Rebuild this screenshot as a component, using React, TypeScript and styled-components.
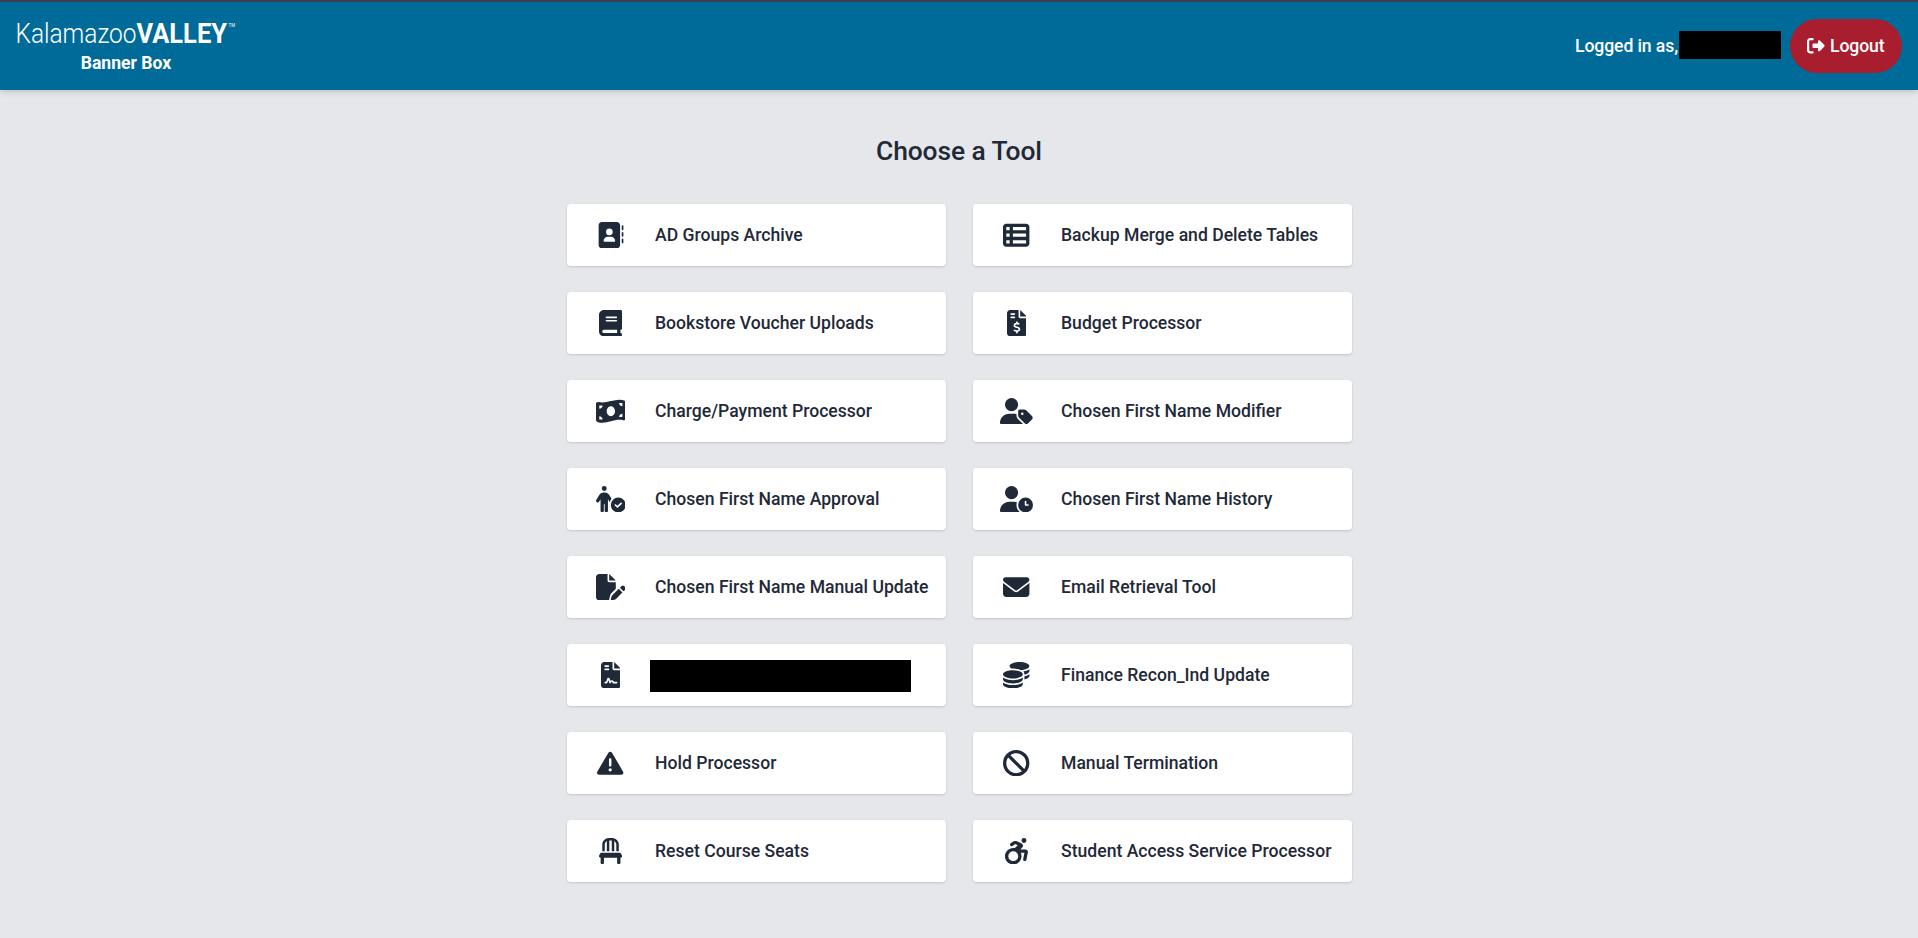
import React from "react";
import styled, { createGlobalStyle } from "styled-components";
import type { IconType } from "react-icons";
import {
  FaAddressBook,
  FaTableList,
  FaBook,
  FaFileInvoiceDollar,
  FaMoneyBillWave,
  FaUserTag,
  FaPersonCircleCheck,
  FaUserClock,
  FaFilePen,
  FaEnvelope,
  FaFileContract,
  FaCoins,
  FaTriangleExclamation,
  FaBan,
  FaChair,
  FaWheelchairMove,
  FaRightFromBracket,
} from "react-icons/fa6";

const GlobalStyle = createGlobalStyle`
  *, *::before, *::after { box-sizing: border-box; }
  body {
    margin: 0;
    min-height: 100vh;
    background: #e5e7eb;
    color: #1f2937;
    font-family: Roboto, "Liberation Sans", sans-serif;
    font-weight: 500;
    font-size: 17.6px;
  }
`;

const Header = styled.header`
  display: flex;
  align-items: center;
  justify-content: space-between;
  height: 90px;
  padding: 0 16px;
  border-top: 2px solid #374151;
  background: #006b99;
  color: #fff;
  box-shadow: 0 4px 6px -1px rgba(0, 0, 0, 0.1), 0 2px 4px -1px rgba(0, 0, 0, 0.06);
`;

const Brand = styled.div`
  display: flex;
  flex-direction: column;
  align-items: center;
  width: 220px;
  margin-top: 2px;
`;

const Logo = styled.svg`
  display: block;
  width: 220px;
  height: 26px;
  fill: #fff;
  overflow: visible;
`;

const AppName = styled.div`
  margin-top: 5px;
  font-size: 17.6px;
  line-height: 26px;
  font-weight: 700;
`;

const Session = styled.div`
  display: flex;
  align-items: center;
  letter-spacing: -0.1px;
`;

const Redacted = styled.span<{ $width: number; $height: number }>`
  display: block;
  flex: none;
  width: ${(p) => p.$width}px;
  height: ${(p) => p.$height}px;
  background: #000;
`;

const UserName = styled(Redacted)`
  margin: 0 0 2px 1px;
`;

const SessionText = styled.span`
  padding-bottom: 1px;
`;

const LogoutButton = styled.button`
  display: flex;
  align-items: center;
  justify-content: center;
  gap: 5px;
  width: 112px;
  height: 54px;
  margin-left: 9px;
  padding: 0 0 1px;
  border: 0;
  border-radius: 27px;
  background: #a91e2e;
  color: #fff;
  font: inherit;
  letter-spacing: inherit;
`;

const Main = styled.main`
  display: flex;
  flex-direction: column;
  align-items: center;
`;

const Title = styled.h1`
  margin: 43px 0 35px;
  font-size: 26.4px;
  line-height: 36px;
  font-weight: 500;
  letter-spacing: -0.1px;
`;

const ToolGrid = styled.div`
  display: grid;
  grid-template-columns: repeat(2, 379px);
  gap: 26px 27px;
`;

const ToolCard = styled.a`
  display: flex;
  align-items: center;
  height: 62px;
  border-radius: 4px;
  background: #fff;
  box-shadow: 0 1px 3px rgba(0, 0, 0, 0.1), 0 1px 2px rgba(0, 0, 0, 0.06);
  white-space: nowrap;
`;

/* Font Awesome glyphs share a 512-unit height; $units is the glyph's own width. */
const IconSlot = styled.span<{ $units: number }>`
  display: flex;
  justify-content: center;
  width: 88px;
  flex: none;

  svg {
    display: block;
    flex: none;
    width: ${(p) => (p.$units / 512) * 26.4}px;
    height: 26.4px;
  }
`;

const RedactedLabel = styled(Redacted)`
  margin: 2px 0 0 -5px;
`;

const ToolName = styled.span`
  padding: 0 0 1px 0.5px;
`;

const tools: { icon: IconType; units: number; name?: string }[] = [
  { icon: FaAddressBook, units: 512, name: "AD Groups Archive" },
  { icon: FaTableList, units: 512, name: "Backup Merge and Delete Tables" },
  { icon: FaBook, units: 448, name: "Bookstore Voucher Uploads" },
  { icon: FaFileInvoiceDollar, units: 384, name: "Budget Processor" },
  { icon: FaMoneyBillWave, units: 576, name: "Charge/Payment Processor" },
  { icon: FaUserTag, units: 640, name: "Chosen First Name Modifier" },
  { icon: FaPersonCircleCheck, units: 576, name: "Chosen First Name Approval" },
  { icon: FaUserClock, units: 640, name: "Chosen First Name History" },
  { icon: FaFilePen, units: 576, name: "Chosen First Name Manual Update" },
  { icon: FaEnvelope, units: 512, name: "Email Retrieval Tool" },
  { icon: FaFileContract, units: 384 },
  { icon: FaCoins, units: 512, name: "Finance Recon_Ind Update" },
  { icon: FaTriangleExclamation, units: 512, name: "Hold Processor" },
  { icon: FaBan, units: 512, name: "Manual Termination" },
  { icon: FaChair, units: 448, name: "Reset Course Seats" },
  { icon: FaWheelchairMove, units: 448, name: "Student Access Service Processor" },
];

export default function App() {
  return (
    <>
      <GlobalStyle />
      <Header>
        <Brand>
          <Logo viewBox="0 0 220 26">
            <text x="-0.5" y="24" fontSize="27.5" fontWeight="300" textLength="121" lengthAdjust="spacingAndGlyphs">
              Kalamazoo
            </text>
            <text x="120.5" y="24" fontSize="27.5" fontWeight="700" textLength="90.5" lengthAdjust="spacingAndGlyphs">
              VALLEY
            </text>
            <text x="212.5" y="7.5" fontSize="5" fontWeight="400" textLength="6.5" lengthAdjust="spacingAndGlyphs">
              TM
            </text>
          </Logo>
          <AppName>Banner Box</AppName>
        </Brand>
        <Session>
          <SessionText>Logged in as,</SessionText>
          <UserName $width={102} $height={28} />
          <LogoutButton>
            <FaRightFromBracket size={17.6} />
            Logout
          </LogoutButton>
        </Session>
      </Header>
      <Main>
        <Title>Choose a Tool</Title>
        <ToolGrid>
          {tools.map(({ icon: Icon, units, name }, i) => (
            <ToolCard key={i}>
              <IconSlot $units={units}>
                <Icon />
              </IconSlot>
              {name ? <ToolName>{name}</ToolName> : <RedactedLabel $width={261} $height={32} />}
            </ToolCard>
          ))}
        </ToolGrid>
      </Main>
    </>
  );
}
